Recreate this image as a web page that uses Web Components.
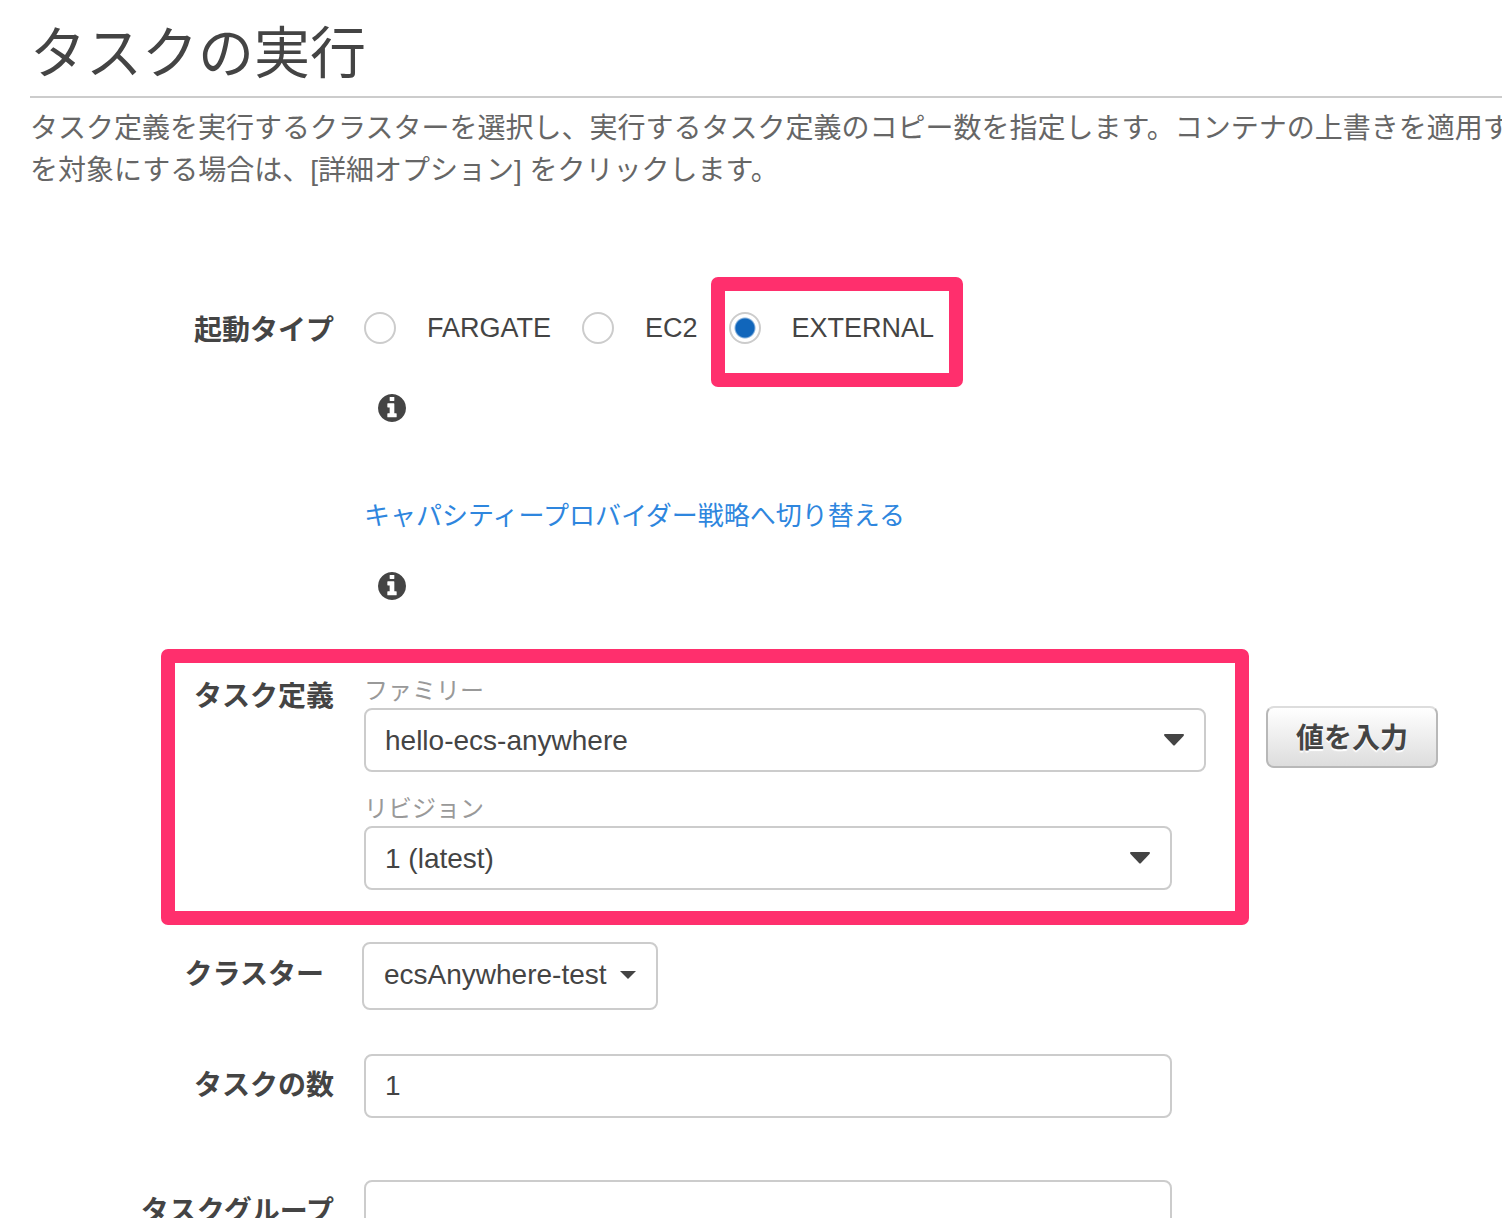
<!DOCTYPE html>
<html lang="ja">
<head>
<meta charset="utf-8">
<title>タスクの実行</title>
<style>
  html, body { margin: 0; height: 100%; overflow: hidden; background: #fff; }
  body {
    font-family: "Liberation Sans", "Noto Sans CJK JP", sans-serif;
    font-size: 28px;
    color: #444;
    --line: #ccc;
    --label-width: 304px;
    --column-gap: 30px;
    --accent: #ff2f6d;
  }
</style>
</head>
<body>
<run-task-page></run-task-page>
<script>
const define = (name, html, setup) => {
  const template = document.createElement('template');
  template.innerHTML = '<style>*{box-sizing:border-box}</style>' + html;
  customElements.define(name, class extends HTMLElement {
    constructor() {
      super();
      this.attachShadow({ mode: 'open' }).append(template.content.cloneNode(true));
    }
    connectedCallback() {
      if (setup) setup(this, this.shadowRoot);
    }
  });
};

/* Round "i" icon on its own line */
define('info-icon', `
  <style>
    :host { display: flex; padding-left: 14px; }
    svg { width: 28px; height: 28px; fill: currentColor; }
  </style>
  <svg viewBox="0 0 1536 1536" role="img" aria-label="情報"><path d="M1024 1248v-160q0-14-9-23t-23-9h-96v-512q0-14-9-23t-23-9h-320q-14 0-23 9t-9 23v160q0 14 9 23t23 9h96v320h-96q-14 0-23 9t-9 23v160q0 14 9 23t23 9h448q14 0 23-9t9-23zm-128-896v-160q0-14-9-23t-23-9h-192q-14 0-23 9t-9 23v160q0 14 9 23t23 9h192q14 0 23-9t9-23zm640 416q0 209-103 385.5t-279.5 279.5-385.5 103-385.5-103-279.5-279.5-103-385.5 103-385.5 279.5-279.5 385.5-103 385.5 103 279.5 279.5 103 385.5z"/></svg>`);

/* Thick frame drawn over whatever it wraps */
define('highlight-frame', `
  <style>
    :host { display: block; position: relative; }
    :host::after {
      content: "";
      position: absolute;
      inset: var(--frame-inset, 0);
      border: 14px solid var(--accent);
      border-radius: 7px;
      pointer-events: none;
    }
  </style>
  <slot></slot>`);

/* Title, rule and introduction */
define('page-heading', `
  <style>
    :host { display: block; }
    header { border-bottom: 2px solid var(--line); padding: 14px 0 2px; }
    h1 { margin: 0; font-size: 56px; font-weight: 400; line-height: 80px; }
    p { margin: 10px 0 0; line-height: 42px; color: #666; white-space: nowrap; }
  </style>
  <header><h1><slot name="title"></slot></h1></header>
  <p><slot></slot></p>`);

/* Right-aligned caption with its content beside it */
define('form-row', `
  <style>
    :host { display: grid; grid-template-columns: var(--label-width) minmax(0, 1fr); column-gap: var(--column-gap); align-items: start; }
    .caption { text-align: right; font-weight: 700; line-height: 46px; }
  </style>
  <div class="caption" id="caption"></div>
  <div role="group" aria-labelledby="caption"><slot></slot></div>`,
  (host, root) => { root.getElementById('caption').textContent = host.getAttribute('label'); });

define('launch-type', `
  <style>
    :host { display: flex; align-items: center; gap: 31px; font-size: 27px; line-height: 40px; }
    label { display: flex; align-items: center; gap: 31px; }
    input {
      appearance: none; margin: 0; width: 32px; height: 32px;
      border: 2px solid var(--line); border-radius: 50%; background: #fff;
    }
    input:checked { background: radial-gradient(circle, #16b 9px, #fff 11px); }
    highlight-frame { --frame-inset: -31px -29px -39px -18px; }
  </style>
  <label><input type="radio" name="launch" value="FARGATE">FARGATE</label>
  <label><input type="radio" name="launch" value="EC2">EC2</label>
  <highlight-frame><label><input type="radio" name="launch" value="EXTERNAL" checked>EXTERNAL</label></highlight-frame>`);

define('select-field', `
  <style>
    :host { display: block; }
    label { display: block; font-size: 24px; line-height: 34px; color: #999; }
    .box { display: grid; align-items: center; }
    .box > * { grid-area: 1 / 1; }
    select {
      appearance: none; width: 100%; height: 64px; margin: 0; padding: 0 60px 0 19px;
      font: inherit; color: inherit; background: #fff;
      border: 2px solid var(--line); border-radius: 8px;
    }
    svg { justify-self: end; margin-right: 22px; width: 20px; height: 12px; fill: currentColor; pointer-events: none; }
  </style>
  <label for="control"></label>
  <div class="box">
    <select id="control"><option></option></select>
    <svg viewBox="0 0 20 12" aria-hidden="true"><path d="M1 0h18q1 0 1 1l-.5 1-8.500 9q-1 1-2 0L.5 2 0 1q0-1 1-1z"/></svg>
  </div>`,
  (host, root) => {
    root.querySelector('label').textContent = host.getAttribute('label');
    root.querySelector('option').textContent = host.getAttribute('value');
  });

define('push-button', `
  <style>
    :host { display: block; }
    button {
      height: 62px; padding: 0 28px 2px; font: inherit; font-weight: 700; color: inherit;
      text-shadow: 0 2px 1px #fff;
      background: linear-gradient(#fff, #ddd);
      border: 2px solid #b8b8b8; border-top-color: #ddd; border-radius: 8px;
    }
  </style>
  <button type="button"><slot></slot></button>`);

define('text-link', `
  <style>
    :host { display: block; font-size: 26px; line-height: 40px; }
    a { color: #2e86de; text-decoration: none; }
  </style>
  <a href="#"><slot></slot></a>`);

define('cluster-row', `
  <style>
    :host { display: grid; grid-template-columns: calc(var(--label-width) - 10px) auto; column-gap: 38px; justify-content: start; align-items: center; }
    label { text-align: right; font-weight: 700; line-height: 40px; padding-bottom: 2px; }
    button {
      display: flex; align-items: center; gap: 13px; height: 68px; padding: 0 20px 2px;
      font: inherit; color: inherit; background: #fff;
      border: 2px solid var(--line); border-radius: 8px;
    }
    svg { width: 16px; height: 8px; fill: currentColor; }
  </style>
  <label for="control">クラスター</label>
  <button id="control" type="button" aria-haspopup="listbox">ecsAnywhere-test
    <svg viewBox="0 0 16 8" aria-hidden="true"><path d="M0 0h16L8 8z"/></svg>
  </button>`);

define('text-row', `
  <style>
    :host { display: grid; grid-template-columns: var(--label-width) minmax(0, 1fr); column-gap: var(--column-gap); align-items: center; padding-right: 330px; }
    label { text-align: right; font-weight: 700; line-height: 40px; padding-bottom: 1px; }
    input {
      width: 100%; height: 64px; margin: 0; padding: 0 19px; font: inherit; color: inherit;
      background: #fff; border: 2px solid var(--line); border-radius: 8px;
    }
  </style>
  <label for="control"></label>
  <input id="control" type="text">`,
  (host, root) => {
    root.querySelector('label').textContent = host.getAttribute('label');
    root.querySelector('input').value = host.getAttribute('value') || '';
  });

define('run-task-page', `
  <style>
    :host { display: block; padding-left: 30px; }
    form { margin: 0; padding-top: 116px; }
    .stack { display: flex; flex-direction: column; }
    .launch info-icon { margin-top: 46px; }
    .launch text-link { margin-top: 74px; }
    .launch text-link + info-icon { margin-top: 36px; }
    .definition { display: flex; align-items: flex-start; gap: 60px; margin-top: 74px; padding-right: 64px; }
    .definition highlight-frame { flex: 1; min-width: 0; --frame-inset: -25px -43px -35px 131px; }
    .definition push-button { margin-top: 32px; }
    .fields { display: flex; flex-direction: column; gap: 20px; }
    .revision { margin-right: 34px; }
    cluster-row { margin-top: 52px; }
    .count { margin-top: 44px; }
    .group { margin-top: 62px; }
  </style>
  <main>
    <page-heading>
      <span slot="title">タスクの実行</span>
      タスク定義を実行するクラスターを選択し、実行するタスク定義のコピー数を指定します。コンテナの上書きを適用す<br>を対象にする場合は、[詳細オプション] をクリックします。
    </page-heading>
    <form>
      <form-row class="launch" label="起動タイプ">
        <div class="stack">
          <launch-type></launch-type>
          <info-icon></info-icon>
          <text-link>キャパシティープロバイダー戦略へ切り替える</text-link>
          <info-icon></info-icon>
        </div>
      </form-row>
      <div class="definition">
        <highlight-frame>
          <form-row label="タスク定義">
            <div class="fields">
              <select-field label="ファミリー" value="hello-ecs-anywhere"></select-field>
              <select-field class="revision" label="リビジョン" value="1 (latest)"></select-field>
            </div>
          </form-row>
        </highlight-frame>
        <push-button>値を入力</push-button>
      </div>
      <cluster-row></cluster-row>
      <text-row class="count" label="タスクの数" value="1"></text-row>
      <text-row class="group" label="タスクグループ"></text-row>
    </form>
  </main>`);
</script>
</body>
</html>
